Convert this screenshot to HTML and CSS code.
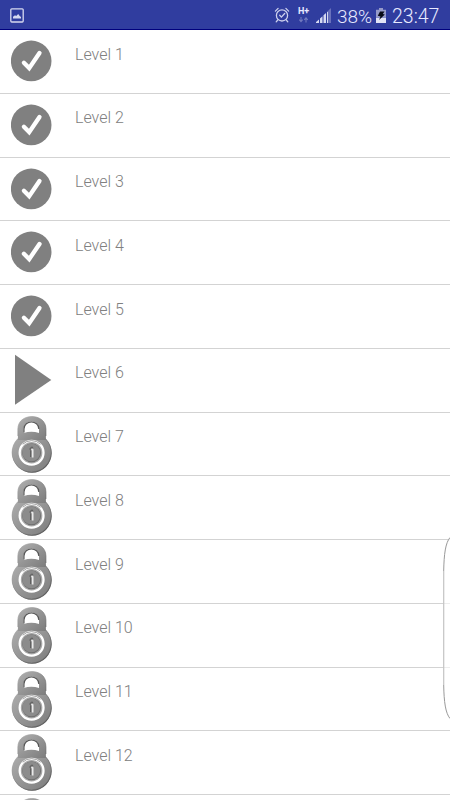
FILE: index.html
```html
<!DOCTYPE html>
<html lang="en">
<head>
  <meta charset="UTF-8">
  <title>Levels</title>
  <link rel="stylesheet" href="styles.css">
</head>
<body>
  <!-- Shared icons -->
  <svg class="icon-defs" width="0" height="0">
    <defs>
      <linearGradient id="metal" x1="0" y1="0" x2="1" y2="1">
        <stop offset="0" stop-color="#b0b0b0"/>
        <stop offset="0.5" stop-color="#959595"/>
        <stop offset="1" stop-color="#7c7c7c"/>
      </linearGradient>
      <linearGradient id="rim" x1="0" y1="0" x2="1" y2="1">
        <stop offset="0" stop-color="#b4b4b4"/>
        <stop offset="0.55" stop-color="#888"/>
        <stop offset="1" stop-color="#555"/>
      </linearGradient>
      <symbol id="done" viewBox="0 0 42 58">
        <circle cx="20.2" cy="27.9" r="20.3" fill="#808080"/>
        <path d="M12.9 29.8l5.3 5.3L28.5 20" fill="none" stroke="#fff" stroke-width="4.3" stroke-linecap="round"/>
      </symbol>
      <symbol id="play" viewBox="0 0 42 58">
        <path d="M4 2.8L40.3 28L4 52.8z" fill="#808080"/>
      </symbol>
      <symbol id="lock" viewBox="0 0 42 58">
        <circle cx="21" cy="37" r="19.7" fill="#555"/>
        <circle cx="20.6" cy="36.5" r="19.5" fill="url(#metal)" stroke="url(#rim)" stroke-width="0.7"/>
        <path d="M6.9 24V13C6.9 -3.6 34.900 -3.6 34.9 13V24z" fill="url(#metal)"/>
        <path d="M6.9 20V13C6.9 -3.6 34.9 -3.6 34.9 13V20" fill="none" stroke="url(#rim)" stroke-width="0.7"/>
        <path d="M12.8 17V13C12.8 3.2 28 3.2 28 13V17Q20.3 14.6 12.8 17z" fill="#fff"/>
        <path d="M13 16.6V13C13 3.7 27.8 3.7 27.8 13" fill="none" stroke="#555" stroke-width="1.1"/>
        <circle cx="20.6" cy="36.7" r="11.9" fill="#a8a8a8" stroke="#fff" stroke-width="2.3"/>
        <path d="M11.7 28.2A12.9 12.9 0 0 1 29.5 28.2" fill="none" stroke="#777" stroke-width="0.7"/>
        <circle cx="20.6" cy="36.7" r="9.5" fill="#707070"/>
        <circle cx="20.3" cy="36.4" r="8.9" fill="#8c8c8c"/>
        <path d="M19.7 41v-6.6a2 2 0 0 1 -0.6 -1.600a1.900 1.900 0 0 1 3 -1.200" fill="none" stroke="#555" stroke-width="1"/>
        <path d="M20 33.400a1.400 1.400 0 0 1 2.500 0v8h-1.700v-6.600z" fill="#e9e9e9"/>
      </symbol>
    </defs>
  </svg>

  <div class="status-bar">
    <svg class="picture" width="14" height="15" viewBox="0 0 14 15">
      <rect x="0.8" y="0.8" width="12.4" height="13.2" rx="1" fill="none" stroke="#d6d9f0" stroke-width="1.3"/>
      <path d="M3 10.5V8.8l2-1.5 1.2 0.8 2-2 1.5 2 1.3 0.8v1.6z" fill="#d6d9f0"/>
    </svg>
    <svg class="alarm" width="16" height="17" viewBox="0 0 16 17">
      <g fill="none" stroke="#ccd0ed" stroke-width="1.3" stroke-linecap="round">
        <circle cx="8" cy="8.4" r="5.6"/>
        <path d="M1.4 4.1L4.1 1.4M14.6 4.1L11.9 1.4M3.7 13l-1.5 1.8M12.3 13l1.5 1.8M5.7 8.3l1.7 1.8L10.7 6.5"/>
      </g>
    </svg>
    <div class="network">
      <span>H+</span>
      <svg width="11" height="6" viewBox="0 0 11 6">
        <path d="M3 0v4M1.3 2.6L3 4.7l1.7-2.1M8 5.5v-4M6.3 2.9L8 0.8l1.7 2.1" fill="none" stroke="#7179be" stroke-width="1.1"/>
      </svg>
    </div>
    <svg class="signal" width="15" height="15" viewBox="0 0 15 15">
      <path d="M0 15v-1l3-2.5V15zM4 15v-4.5l2.5-2.2V15zM7.5 15V7.3L10 5.1V15zM11 15V4.2l1.3-1.2V15z" fill="#d6d9f0"/>
      <path d="M12.3 15V2.5L15 0v15z" fill="#6971bb"/>
    </svg>
    <span class="percent">38%</span>
    <svg class="battery" width="10" height="15" viewBox="0 0 10 15">
      <path d="M0 1.7h3V0h4v1.7h3V9H0z" fill="#969bc9"/>
      <path d="M0 9.5h10V15H0z" fill="#e3e5f6"/>
      <path d="M4 3.5h4.5L6.8 6l2 0.5L3 12L4.5 8.5L1.8 7.8z" fill="#080b18"/>
    </svg>
    <span class="clock">23:47</span>
  </div>

  <ul class="levels">
    <li><svg class="icon"><use href="#done"/></svg><span>Level 1</span></li>
    <li><svg class="icon"><use href="#done"/></svg><span>Level 2</span></li>
    <li><svg class="icon"><use href="#done"/></svg><span>Level 3</span></li>
    <li><svg class="icon"><use href="#done"/></svg><span>Level 4</span></li>
    <li><svg class="icon"><use href="#done"/></svg><span>Level 5</span></li>
    <li><svg class="icon"><use href="#play"/></svg><span>Level 6</span></li>
    <li><svg class="icon"><use href="#lock"/></svg><span>Level 7</span></li>
    <li><svg class="icon"><use href="#lock"/></svg><span>Level 8</span></li>
    <li><svg class="icon"><use href="#lock"/></svg><span>Level 9</span></li>
    <li><svg class="icon"><use href="#lock"/></svg><span>Level 10</span></li>
    <li><svg class="icon"><use href="#lock"/></svg><span>Level 11</span></li>
    <li><svg class="icon"><use href="#lock"/></svg><span>Level 12</span></li>
    <li><svg class="icon"><use href="#lock"/></svg></li>
  </ul>

  <!-- Edge panel handle -->
  <svg class="edge-handle" width="7" height="184" viewBox="0 0 7 184">
    <path d="M7 1.5C2.5 7 1 18 0.7 35V149C1 166 2.5 177 7 182.5z" fill="#fff" fill-opacity="0.6"/>
    <path d="M0.7 35V149" fill="none" stroke="#c4c4c4" stroke-width="1.2"/>
    <path d="M7 1.5C2.5 7 1 18 0.7 35M0.7 149C1 166 2.5 177 7 182.5" fill="none" stroke="#999"/>
  </svg>
</body>
</html>
```
FILE: styles.css
```css
body {
  margin: 0;
  position: relative;
  background-color: #fff;
  font-family: Roboto, sans-serif;
}

.icon-defs {
  display: block;
}

/* Status bar */
.status-bar {
  display: flex;
  align-items: center;
  box-sizing: border-box;
  height: 30px;
  padding: 1px 11px 0 10px;
  background-color: #303d9f;
  border-bottom: 1px solid #00007d;
  color: #e8eaff;
  font-size: 19.5px;
  font-weight: 300;
  line-height: 29px;
}

.status-bar svg {
  display: block;
  flex: none;
}

.alarm {
  margin-left: auto;
  margin-right: 8px;
}

.network {
  width: 11px;
  margin-right: 7px;
  font-size: 9px;
  font-weight: bold;
  line-height: 9px;
}

.network span {
  display: block;
  margin-bottom: 1px;
}

.signal {
  margin-right: 6px;
}

.percent {
  width: 35px;
  margin-right: 4px;
  padding-top: 2px;
  font-size: 19px;
}

.clock {
  width: 47px;
  margin-left: 6px;
  padding-top: 2px;
}

/* Level list */
.levels {
  list-style: none;
  margin: 0;
  padding: 0;
  height: 770px;
  overflow: hidden;
}

.levels li {
  display: flex;
  align-items: flex-start;
  box-sizing: border-box;
  height: 63.75px;
  padding: 3px 0 0 11px;
  border-bottom: 1px solid #d3d3d3;
}

.levels .icon {
  flex: none;
  width: 42px;
  height: 58px;
  margin-right: 22px;
}

.levels span {
  margin-top: 11.5px;
  color: #808080;
  font-size: 16px;
  font-weight: 300;
  line-height: 19px;
}

/* Lies over the right edge of the list */
.edge-handle {
  position: absolute;
  top: 536px;
  right: 0;
}
```
